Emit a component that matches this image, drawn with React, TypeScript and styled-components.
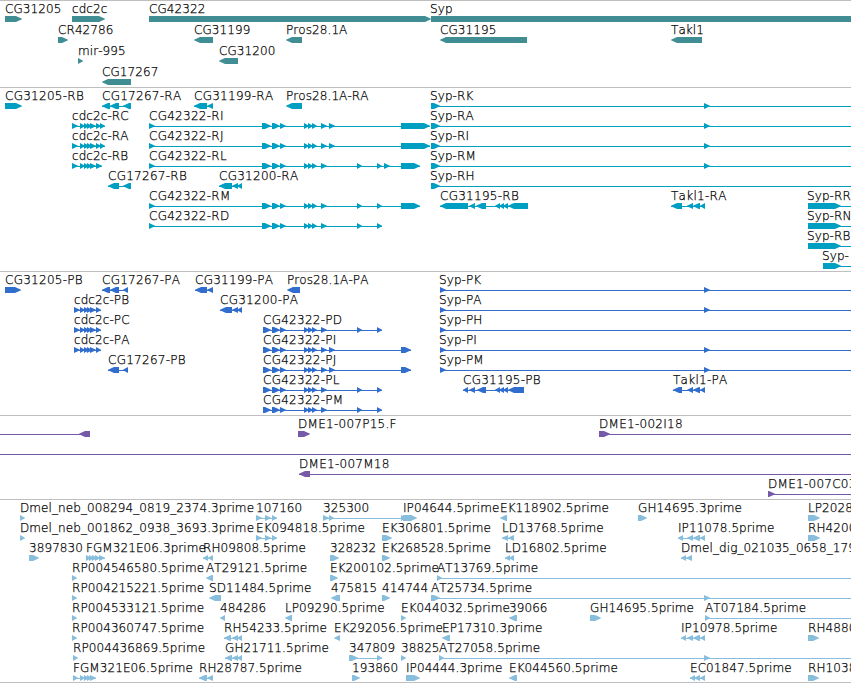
import React from "react";
import styled, { createGlobalStyle } from "styled-components";

type Strand = "+" | "-";
type Exon = [number, number];

interface Feature {
  name?: string;
  strand: Strand;
  exons: Exon[];
  // intron line bounds, when they reach past the visible exons
  from?: number;
  to?: number;
  labelShift?: number;
}

interface TrackData {
  id: string;
  color: string;
  gap?: number;
  rows: Feature[][];
}

const VIEW_WIDTH = 851;
const HEAD = 6;

const fwd = (name: string, exons: Exon[], to?: number): Feature => ({
  name,
  strand: "+",
  exons,
  to,
});

const rev = (name: string, exons: Exon[], to?: number): Feature => ({
  name,
  strand: "-",
  exons,
  to,
});

// Syp runs off the right edge in every isoform
const syp = (name: string, exons: Exon[]): Feature => ({
  ...fwd(name, exons, VIEW_WIDTH),
  labelShift: -1,
});

const start: Exon[] = [[262, 271], [272, 280], [280, 286], [304, 309], [308, 313], [312, 317], [321, 327]];
const codingStart: Exon[] = [[263, 271], ...start.slice(1)];
const cdc2c: Exon[] = [[80, 85], [84, 89], [87, 92], [90, 96], [96, 101]];
const takl: Exon[] = [[687, 693], [693, 700], [700, 705]];
const stop: Exon = [704, 710];

const genes: Feature[][] = [
  [
    fwd("CG31205", [[5, 22]]),
    fwd("cdc2c", [[72, 105]]),
    fwd("CG42322", [[149, 431]]),
    syp("Syp", [[431, 860]]),
  ],
  [
    fwd("CR42786", [[58, 68]]),
    rev("CG31199", [[194, 213]]),
    rev("Pros28.1A", [[286, 302]]),
    rev("CG31195", [[440, 527]]),
    rev("Takl1", [[671, 702]]),
  ],
  [fwd("mir-995", [[78, 83]]), rev("CG31200", [[219, 238]])],
  [rev("CG17267", [[102, 131]])],
];

const transcripts: Feature[][] = [
  [
    fwd("CG31205-RB", [[5, 22]]),
    rev("CG17267-RA", [[102, 110], [110, 119], [123, 131]]),
    rev("CG31199-RA", [[194, 207], [207, 213]]),
    rev("Pros28.1A-RA", [[286, 302]]),
    syp("Syp-RK", [[431, 440], stop]),
  ],
  [
    fwd("cdc2c-RC", [[72, 78], ...cdc2c, [100, 105]]),
    fwd("CG42322-RI", [[149, 155], ...start, [329, 335], [401, 430]]),
    syp("Syp-RA", [[431, 440], stop]),
  ],
  [
    fwd("cdc2c-RA", [[72, 78], ...cdc2c, [100, 105]]),
    fwd("CG42322-RJ", [[149, 155], ...start, [329, 335], [401, 430]]),
    syp("Syp-RI", [[431, 440], stop]),
  ],
  [
    fwd("cdc2c-RB", [[72, 78], ...cdc2c.slice(0, 4), [96, 102]]),
    fwd("CG42322-RL", [[149, 155], ...start, [357, 362], [377, 382], [384, 390], [401, 420]]),
    syp("Syp-RM", [[431, 440], stop]),
  ],
  [
    rev("CG17267-RB", [[108, 119], [123, 131]]),
    rev("CG31200-RA", [[219, 232], [232, 238], [237, 242]]),
    syp("Syp-RH", [[431, 440]]),
  ],
  [
    fwd("CG42322-RM", [[149, 155], ...start, [357, 362], [377, 382], [401, 420]]),
    rev("CG31195-RB", [[440, 468], [469, 475], [476, 486], [495, 500], [499, 504], [503, 508], [508, 528]]),
    rev("Takl1-RA", [[671, 682], ...takl]),
    syp("Syp-RR", [[808, 841]]),
  ],
  [
    fwd("CG42322-RD", [[149, 155], ...start, [357, 362], [377, 382]]),
    syp("Syp-RN", [[808, 841]]),
  ],
  [syp("Syp-RB", [[808, 841]])],
  [syp("Syp-", [[823, 841]])],
];

const proteins: Feature[][] = [
  [
    fwd("CG31205-PB", [[5, 21]]),
    rev("CG17267-PA", [[102, 110], [110, 119], [123, 128]]),
    rev("CG31199-PA", [[195, 207], [207, 213]]),
    rev("Pros28.1A-PA", [[287, 300]]),
    syp("Syp-PK", [[440, 446], stop]),
  ],
  [
    fwd("cdc2c-PB", [[74, 80], ...cdc2c]),
    rev("CG31200-PA", [[220, 232], [232, 238], [237, 242]]),
    syp("Syp-PA", [[440, 446], stop]),
  ],
  [
    fwd("cdc2c-PC", [[74, 80], ...cdc2c]),
    fwd("CG42322-PD", [...codingStart, [357, 362], [377, 382]]),
    syp("Syp-PH", [[440, 446]]),
  ],
  [
    fwd("cdc2c-PA", [[74, 80], ...cdc2c]),
    fwd("CG42322-PI", [...codingStart, [329, 335], [401, 411]]),
    syp("Syp-PI", [[440, 446], stop]),
  ],
  [
    rev("CG17267-PB", [[108, 119], [123, 128]]),
    fwd("CG42322-PJ", [...codingStart, [329, 335], [401, 411]]),
    syp("Syp-PM", [[440, 446], stop]),
  ],
  [
    fwd("CG42322-PL", [...codingStart, [357, 362], [377, 382]]),
    rev("CG31195-PB", [[463, 468], [469, 475], [477, 486], [495, 500], [499, 504], [503, 508], [508, 524]]),
    rev("Takl1-PA", [[673, 682], ...takl]),
  ],
  [fwd("CG42322-PM", [...codingStart, [357, 362], [377, 382]])],
];

const clones: Feature[][] = [
  [
    { strand: "-", exons: [[79, 90]], from: 0 },
    fwd("DME1-007P15.F", [[298, 310]]),
    fwd("DME1-002I18", [[599, 610]], VIEW_WIDTH),
  ],
  [{ strand: "+", exons: [], from: 0, to: VIEW_WIDTH }],
  [rev("DME1-007M18", [[299, 310]], VIEW_WIDTH)],
  [fwd("DME1-007C03", [[768, 775]], VIEW_WIDTH)],
];

const ests: Feature[][] = [
  [
    fwd("Dmel_neb_008294_0819_2374.3prime", [[20, 25]]),
    fwd("107160", [[256, 262], [265, 271], [272, 277]]),
    fwd("325300", [[323, 329], [329, 334], [401, 406]]),
    fwd("IP04644.5prime", [[403, 417]]),
    rev("EK118902.5prime", [[500, 507]]),
    fwd("GH14695.3prime", [[638, 647]]),
    fwd("LP2028", [[808, 820]]),
  ],
  [
    fwd("Dmel_neb_001862_0938_3693.3prime", [[20, 25]]),
    fwd("EK094818.5prime", [[256, 262], [265, 271], [272, 277]]),
    fwd("EK306801.5prime", [[382, 392]]),
    rev("LD13768.5prime", [[502, 508], [508, 514]]),
    rev("IP11078.5prime", [[678, 683], ...takl]),
    fwd("RH4200", [[808, 820]]),
  ],
  [
    fwd("3897830", [[29, 39]]),
    fwd("FGM321E06.3prime", [[86, 91], [89, 94], [92, 97], [95, 100], [99, 105]]),
    rev("RH09808.5prime", [[203, 208], [208, 213]]),
    fwd("328232", [[330, 339]]),
    fwd("EK268528.5prime", [[382, 390]]),
    rev("LD16802.5prime", [[505, 510], [509, 514]]),
    rev("Dmel_dig_021035_0658_1793", [[681, 686], [686, 692]]),
  ],
  [
    fwd("RP004546580.5prime", [[72, 77]]),
    rev("AT29121.5prime", [[206, 213]]),
    fwd("EK200102.5prime", [[330, 338]]),
    fwd("AT13769.5prime", [[437, 442]], VIEW_WIDTH),
  ],
  [
    fwd("RP004215221.5prime", [[72, 77]]),
    rev("SD11484.5prime", [[209, 221]]),
    rev("475815", [[331, 340]]),
    fwd("414744", [[382, 390]]),
    fwd("AT25734.5prime", [[431, 440], stop], VIEW_WIDTH),
  ],
  [
    fwd("RP004533121.5prime", [[72, 77]]),
    rev("484286", [[220, 225]]),
    rev("LP09290.5prime", [[285, 292]]),
    fwd("EK044032.5prime", [[401, 406]]),
    rev("39066", [[509, 517]]),
    fwd("GH14695.5prime", [[590, 601]]),
    fwd("AT07184.5prime", [[705, 710]], VIEW_WIDTH),
  ],
  [
    fwd("RP004360747.5prime", [[72, 77]]),
    rev("RH54233.5prime", [[224, 231], [232, 238], [237, 242]]),
    rev("EK292056.5prime", [[334, 340]]),
    rev("EP17310.3prime", [[442, 450]]),
    rev("IP10978.5prime", [[681, 686], ...takl]),
    fwd("RH4880", [[808, 819]]),
  ],
  [
    fwd("RP004436869.5prime", [[73, 78]]),
    rev("GH21711.5prime", [[225, 232], [232, 238], [237, 242]]),
    fwd("347809", [[349, 358], [377, 382]]),
    fwd("38825", [[401, 406]]),
    fwd("AT27058.5prime", [[439, 444], stop], VIEW_WIDTH),
  ],
  [
    fwd("FGM321E06.5prime", [[73, 78], [80, 85], [84, 89], [87, 92], [90, 96]]),
    rev("RH28787.5prime", [[199, 207], [207, 213]]),
    fwd("193860", [[352, 360]]),
    fwd("IP04444.3prime", [[406, 420]]),
    rev("EK044560.5prime", [[509, 517]]),
    rev("EC01847.5prime", [[690, 695], [694, 700], [700, 705]]),
    fwd("RH1038", [[808, 819]]),
  ],
];

const tracks: TrackData[] = [
  { id: "genes", color: "#408e94", gap: 1, rows: genes },
  { id: "transcripts", color: "#009fc1", rows: transcripts },
  { id: "proteins", color: "#316dcd", rows: proteins },
  { id: "clones", color: "#765aa8", rows: clones },
  { id: "ests", color: "#87bddd", rows: ests },
];

const exonPoints = ([x1, x2]: Exon, strand: Strand) => {
  const head = Math.min(HEAD, x2 - x1);
  return strand === "+"
    ? `${x1},0 ${x2 - head},0 ${x2},2.8 ${x2},3.2 ${x2 - head},6 ${x1},6`
    : `${x2},0 ${x1 + head},0 ${x1},2.8 ${x1},3.2 ${x1 + head},6 ${x2},6`;
};

// isoform and clone names, e.g. CG31205-RB
const isSuffixed = (name?: string) => /\d-/.test(name ?? "");

const FeatureGlyph = ({ feature }: { feature: Feature }) => {
  const { exons, strand } = feature;
  const from = feature.from ?? exons[0][0];
  const to = feature.to ?? exons[exons.length - 1][1];
  const hasLine =
    exons.length > 1 || feature.from !== undefined || feature.to !== undefined;

  return (
    <g>
      {hasLine && <rect x={from} y={3} width={to - from} height={1} />}
      {exons.map((exon) => (
        <polygon key={exon[0]} points={exonPoints(exon, strand)} />
      ))}
    </g>
  );
};

const App = () => {
  return (
    <>
      <GlobalStyle />
      <Browser>
        {tracks.map((track) => (
          <Track key={track.id} $color={track.color} $gap={track.gap ?? 0}>
            {track.rows.map((row, i) => (
              <Row key={i}>
                <Labels>
                  {row
                    .filter((feature) => feature.name)
                    .map((feature) => (
                      <Label
                        key={feature.name}
                        $wide={isSuffixed(feature.name)}
                        style={{
                          left: feature.exons[0][0] + (feature.labelShift ?? 0),
                        }}
                      >
                        {feature.name}
                      </Label>
                    ))}
                </Labels>
                <Lane width={VIEW_WIDTH} height={6}>
                  {row.map((feature, j) => (
                    <FeatureGlyph key={j} feature={feature} />
                  ))}
                </Lane>
              </Row>
            ))}
          </Track>
        ))}
      </Browser>
    </>
  );
};

const GlobalStyle = createGlobalStyle`
  body {
    margin: 0;
    background: #fff;
    overflow: hidden;
  }
`;

const Browser = styled.main`
  width: 851px;
  height: 683px;
  box-sizing: border-box;
  overflow: hidden;
  border-bottom: 1px solid #bfbfbf;
  font-family: "DejaVu Sans", sans-serif;
  font-size: 12px;
  font-kerning: none;
  color: #000;
`;

const Track = styled.section<{ $color: string; $gap: number }>`
  display: flex;
  flex-direction: column;
  gap: ${({ $gap }) => $gap}px;
  padding: 1px 0 2px;
  border-top: 1px solid #bfbfbf;
  fill: ${({ $color }) => $color};

  &:last-child {
    padding-bottom: 0;
  }
`;

const Row = styled.div`
  display: flex;
  flex-direction: column;
  height: 20px;
`;

/* labels sit at their feature's position on the sequence */
const Labels = styled.div`
  position: relative;
  height: 14px;
`;

const Label = styled.span<{ $wide: boolean }>`
  position: absolute;
  top: 0;
  line-height: 14px;
  font-weight: 200;
  letter-spacing: ${({ $wide }) => ($wide ? "0.27px" : "0.08px")};
  white-space: nowrap;
  -webkit-text-stroke: 0.25px #000;
`;

const Lane = styled.svg`
  display: block;
  flex: none;
`;

export default App;
